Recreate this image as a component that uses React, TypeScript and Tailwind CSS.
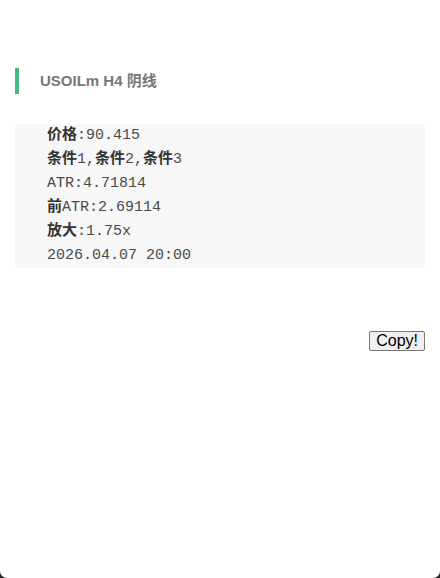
export default function App() {
  const lines: { label?: string; value: string }[] = [
    { label: '价格', value: ':90.415' },
    { label: '条件1,条件2,条件3', value: '' },
    { value: 'ATR:4.71814' },
    { label: '前', value: 'ATR:2.69114' },
    { label: '放大', value: ':1.75x' },
    { value: '2026.04.07 20:00' },
  ]

  return (
    <div className="h-[578px] w-[440px] bg-[#2a2a2a]">
      <div className="h-full w-full bg-white rounded-b-[7px] pt-[68px]" style={{ fontFamily: '"Liberation Sans", Arial, "Noto Sans CJK SC", sans-serif' }}>
        {/* title */}
        <div className="ml-[15px] flex h-[26px] items-center border-l-[4px] border-[#42b983] pl-[21px]">
          <span className="text-[15px] font-bold text-[#777]">USOILm H4 阴线</span>
        </div>

        {/* code block */}
        <div
          className="mx-[15px] mt-[30px] bg-[#f7f7f7] pl-[32px] text-[15px] text-[#4a4a4a]"
          style={{ fontFamily: '"Liberation Mono", "Courier New", "Noto Sans CJK SC", monospace' }}
        >
          {lines.map((l, i) => (
            <div key={i} className="h-[24px] whitespace-pre leading-[24px]">
              {l.label && renderLabel(l.label)}
              <span>{l.value}</span>
            </div>
          ))}
        </div>

        <div className="mt-[63px] flex justify-end pr-[15px]">
          <button className="h-[20px] rounded-[2px] border border-[#767676] bg-[#efefef] px-[6px] text-[16px] leading-[18px] text-black">
            Copy!
          </button>
        </div>
      </div>
    </div>
  )
}

function renderLabel(label: string) {
  // digits and commas in the label are set in the mono face, CJK in bold sans
  return label.split(/([0-9,]+)/).map((part, i) =>
    /[0-9,]/.test(part) ? (
      <span key={i}>{part}</span>
    ) : (
      <span key={i} className="font-bold leading-[18px] text-[#333]" style={{ fontFamily: '"Noto Sans CJK SC", sans-serif' }}>{part}</span>
    )
  )
}
